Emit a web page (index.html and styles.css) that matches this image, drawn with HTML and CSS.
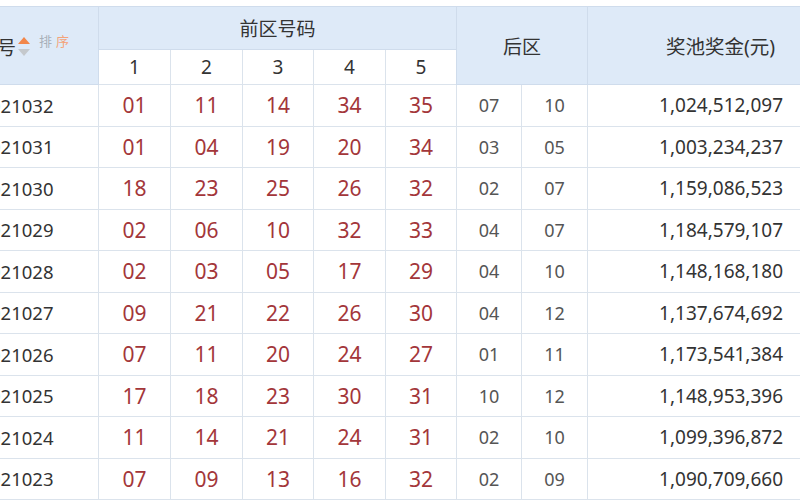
FILE: index.html
```html
<!DOCTYPE html>
<html lang="zh-CN">
<head>
<meta charset="utf-8">
<title>大乐透开奖</title>
<link rel="stylesheet" href="styles.css">
</head>
<body>
<div class="page">
<table class="draws">
  <colgroup>
    <col class="c-period">
    <col class="c-f1"><col class="c-f2"><col class="c-f3"><col class="c-f4"><col class="c-f5">
    <col class="c-b1"><col class="c-b2">
    <col class="c-pool">
  </colgroup>
  <thead>
    <tr class="h1">
      <th rowspan="2" class="th-period">
        <span class="period-label">期号</span><span class="sort-arrows"><span class="arr up"></span><span class="arr down"></span></span><span class="sort-text"><span class="st1">排</span><span class="st2">序</span></span>
      </th>
      <th colspan="5">前区号码</th>
      <th colspan="2" rowspan="2">后区</th>
      <th rowspan="2" class="th-pool">奖池奖金(元)</th>
    </tr>
    <tr class="h2">
      <th class="sub">1</th><th class="sub">2</th><th class="sub">3</th><th class="sub">4</th><th class="sub">5</th>
    </tr>
  </thead>
  <tbody>
    <tr><td class="period">2021032</td><td class="f">01</td><td class="f">11</td><td class="f">14</td><td class="f">34</td><td class="f">35</td><td class="b">07</td><td class="b">10</td><td class="pool">1,024,512,097</td></tr>
    <tr><td class="period">2021031</td><td class="f">01</td><td class="f">04</td><td class="f">19</td><td class="f">20</td><td class="f">34</td><td class="b">03</td><td class="b">05</td><td class="pool">1,003,234,237</td></tr>
    <tr><td class="period">2021030</td><td class="f">18</td><td class="f">23</td><td class="f">25</td><td class="f">26</td><td class="f">32</td><td class="b">02</td><td class="b">07</td><td class="pool">1,159,086,523</td></tr>
    <tr><td class="period">2021029</td><td class="f">02</td><td class="f">06</td><td class="f">10</td><td class="f">32</td><td class="f">33</td><td class="b">04</td><td class="b">07</td><td class="pool">1,184,579,107</td></tr>
    <tr><td class="period">2021028</td><td class="f">02</td><td class="f">03</td><td class="f">05</td><td class="f">17</td><td class="f">29</td><td class="b">04</td><td class="b">10</td><td class="pool">1,148,168,180</td></tr>
    <tr><td class="period">2021027</td><td class="f">09</td><td class="f">21</td><td class="f">22</td><td class="f">26</td><td class="f">30</td><td class="b">04</td><td class="b">12</td><td class="pool">1,137,674,692</td></tr>
    <tr><td class="period">2021026</td><td class="f">07</td><td class="f">11</td><td class="f">20</td><td class="f">24</td><td class="f">27</td><td class="b">01</td><td class="b">11</td><td class="pool">1,173,541,384</td></tr>
    <tr><td class="period">2021025</td><td class="f">17</td><td class="f">18</td><td class="f">23</td><td class="f">30</td><td class="f">31</td><td class="b">10</td><td class="b">12</td><td class="pool">1,148,953,396</td></tr>
    <tr><td class="period">2021024</td><td class="f">11</td><td class="f">14</td><td class="f">21</td><td class="f">24</td><td class="f">31</td><td class="b">02</td><td class="b">10</td><td class="pool">1,099,396,872</td></tr>
    <tr><td class="period">2021023</td><td class="f">07</td><td class="f">09</td><td class="f">13</td><td class="f">16</td><td class="f">32</td><td class="b">02</td><td class="b">09</td><td class="pool">1,090,709,660</td></tr>
  </tbody>
</table>
</div>
</body>
</html>
```

FILE: styles.css
```css
html, body {
  margin: 0;
  padding: 0;
  background: #ffffff;
  overflow: hidden;
}
body {
  width: 800px;
  height: 500px;
  font-family: "Noto Sans", "Noto Sans CJK SC", sans-serif;
  color: #333333;
}
.page {
  padding-top: 6px;
  width: 800px;
  height: 494px;
  overflow: hidden;
}
.draws {
  margin-left: -60px;
  border-collapse: collapse;
  table-layout: fixed;
  width: 862px;
}
.c-period { width: 158px; }
.c-f1 { width: 72px; }
.c-f2 { width: 72px; }
.c-f3 { width: 71px; }
.c-f4 { width: 72px; }
.c-f5 { width: 71px; }
.c-b1 { width: 65px; }
.c-b2 { width: 66px; }
.c-pool { width: 215px; }

.draws th, .draws td {
  border: 1px solid #dbe3ec;
  padding: 0;
  text-align: center;
  white-space: nowrap;
}
.draws th {
  background: #deeaf8;
  font-weight: normal;
  font-size: 19px;
  color: #333333;
  border-color: #cfdcec;
}
.h1 th { height: 42px; }
.h2 th { height: 34px; }
.draws th.sub {
  background: #ffffff;
  border-color: #dbe3ec;
  font-size: 19px;
}
.draws th.th-period {
  padding-left: 12px;
}
.period-label {
  vertical-align: middle;
}
.sort-arrows {
  display: inline-flex;
  flex-direction: column;
  gap: 5px;
  vertical-align: middle;
  margin-left: 2px;
}
.arr {
  width: 0;
  height: 0;
  border-left: 6px solid transparent;
  border-right: 6px solid transparent;
}
.arr.up { border-bottom: 7px solid #f2874a; }
.arr.down { border-top: 7px solid #c4c8cc; }
.sort-text {
  font-size: 13px;
  margin-left: 9px;
  vertical-align: 6px;
  letter-spacing: 4px;
}
.st1 { color: #a8b0b8; }
.st2 { color: #f4a47a; }

.draws td { height: 40.5px; }
.draws td.period { font-size: 18.5px; color: #333333; padding-right: 6px; }
.f { font-size: 21px; color: #a3363a; }
.b { font-size: 18px; color: #555555; }
.draws td.pool {
  font-size: 19px;
  color: #333333;
  text-align: right;
  padding-right: 19px;
}
.draws th.th-pool {
  text-align: right;
  padding-right: 27px;
  font-size: 19.5px;
}
```
